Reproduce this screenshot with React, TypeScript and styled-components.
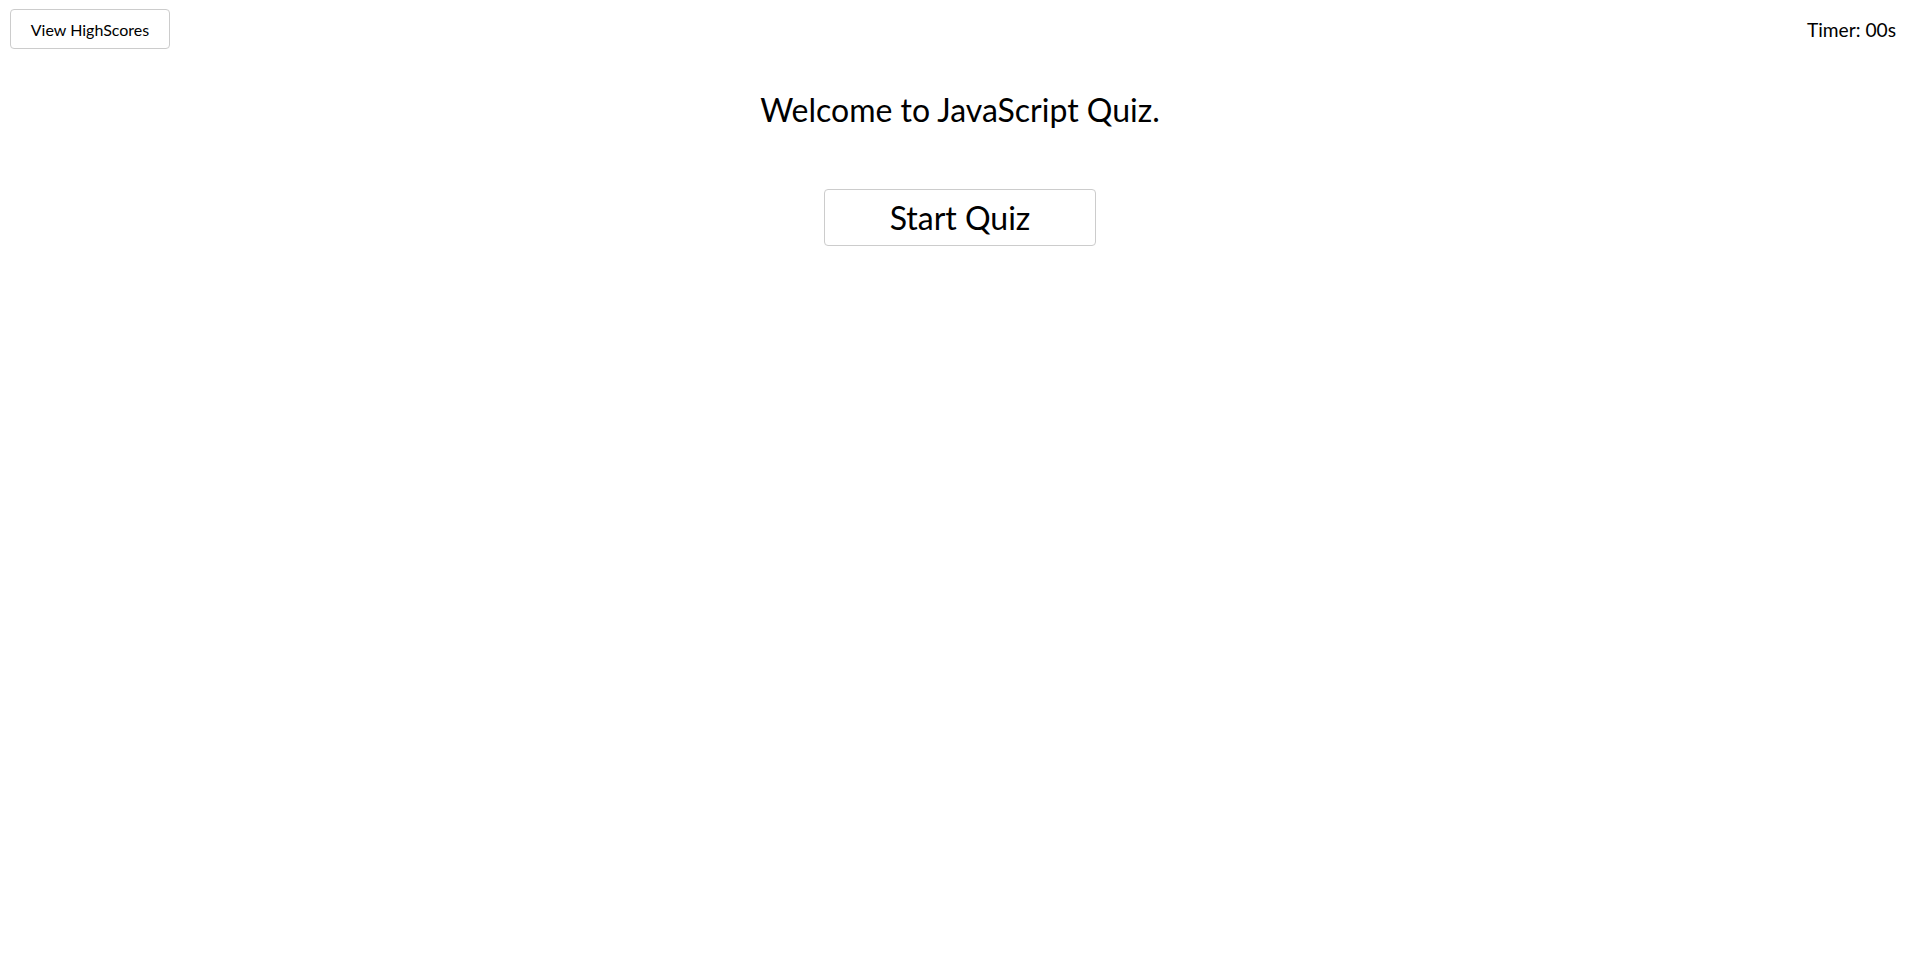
import React from "react";
import styled, { createGlobalStyle } from "styled-components";

const GlobalStyle = createGlobalStyle`
  html, body {
    margin: 0;
    padding: 0;
    background: #ffffff;
    font-family: Lato, "Open Sans", sans-serif;
    color: #000;
  }
`;

const Page = styled.div`
  display: flex;
  flex-direction: column;
  min-height: 978px;
`;

const Header = styled.header`
  display: flex;
  justify-content: space-between;
  align-items: center;
  padding: 9px 24px 0 10px;
`;

const ScoresButton = styled.button`
  width: 160px;
  height: 40px;
  background: #fff;
  border: 1px solid #cccccc;
  border-radius: 4px;
  font-family: Lato, sans-serif;
  font-size: 16px;
  color: #000;
  cursor: pointer;
`;

const Timer = styled.div`
  font-size: 19.2px;
`;

const Main = styled.main`
  display: flex;
  flex-direction: column;
  align-items: center;
  padding-top: 42px;
`;

const Title = styled.h1`
  margin: 0;
  font-size: 32px;
  font-weight: 400;
  line-height: 38px;
`;

const StartButton = styled.button`
  margin-top: 60px;
  width: 272px;
  height: 57px;
  background: #fff;
  border: 1px solid #cccccc;
  border-radius: 4px;
  font-family: Lato, sans-serif;
  font-size: 32px;
  color: #000;
  cursor: pointer;
`;

export default function App() {
  return (
    <>
      <GlobalStyle />
      <Page>
        <Header>
          <ScoresButton>View HighScores</ScoresButton>
          <Timer>Timer: 00s</Timer>
        </Header>
        <Main>
          <Title>Welcome to JavaScript Quiz.</Title>
          <StartButton>Start Quiz</StartButton>
        </Main>
      </Page>
    </>
  );
}
